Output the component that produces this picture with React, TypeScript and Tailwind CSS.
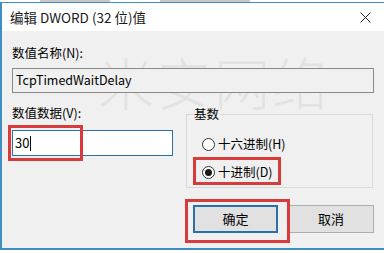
import React from "react";

const font = { fontFamily: '"Noto Sans CJK SC", "Noto Sans", sans-serif' };

export default function App() {
  return (
    <div className="relative w-[384px] h-[253px] overflow-hidden bg-white text-[12.5px] text-black" style={font}>
      {/* remnant strip of previous content */}
      <div className="h-[2px] bg-white relative">
        <div className="absolute left-[40px] top-0 w-[70px] h-[2px] bg-[#c8c8c8]" />
        <div className="absolute left-[160px] top-0 w-[90px] h-[2px] bg-[#c8c8c8]" />
      </div>
      <div className="flex flex-col h-[248px] border-l-2 border-t border-b-2 border-[#3d8fbf]">
        {/* title bar */}
        <div className="h-[28px] bg-white flex items-center justify-between pl-[8px] pr-[12px]">
          <span className="text-[13.5px] text-[#1a1a1a]">编辑 DWORD (32 位)值</span>
          <svg width="11" height="11" viewBox="0 0 11 11" className="mr-[1px]">
            <path d="M0.5 0.5 L10.5 10.5 M10.5 0.5 L0.5 10.5" stroke="#222" strokeWidth="1" />
          </svg>
        </div>
        {/* body */}
        <div className="relative flex-1 bg-[#f0f0f0] pl-[10px] pr-[10px] flex flex-col">
          {/* watermark */}
          <div className="absolute left-[96px] top-[22px] text-[56px] leading-none tracking-[2px] text-[#dadada] opacity-60 pointer-events-none select-none" style={{ fontFamily: '"Noto Sans CJK SC", sans-serif', fontWeight: 300 }}>
            米安网络
          </div>
          <div className="mt-[14px] h-[16px] leading-[16px] relative">数值名称(N):</div>
          <div className="mt-[7px] h-[25px] border border-[#8a8a8a] bg-[#f0f0f0] flex items-center pl-[3px] text-[12.5px] relative">
            TcpTimedWaitDelay
          </div>
          <div className="flex mt-[12px] relative">
            <div className="w-[161px] flex flex-col">
              <div className="h-[16px] leading-[16px]">数值数据(V):</div>
              <div className="mt-[9px] h-[26px] border border-[#2b6fa8] bg-white flex items-center pl-[2px] text-[13px] relative">
                <span>30</span>
                <span className="inline-block w-[1px] h-[15px] bg-black ml-[1px]" />
                <div className="absolute left-[-5px] top-[-6px] w-[75px] h-[36px] border-[3px] border-[#d83b3b]" />
              </div>
            </div>
            <div className="ml-[13px] w-[187px] relative mt-[9px] h-[74px] border border-[#d9d9d9]">
              <span className="absolute left-[6px] top-[-9px] bg-[#f0f0f0] px-[1px] leading-[16px]">基数</span>
              <div className="absolute left-[15px] top-[20px] flex items-center">
                <span className="w-[13px] h-[13px] rounded-full border border-[#333] bg-white" />
                <span className="ml-[3px]">十六进制(H)</span>
              </div>
              <div className="absolute left-[15px] top-[48px] flex items-center">
                <span className="w-[13px] h-[13px] rounded-full border border-[#333] bg-white flex items-center justify-center">
                  <span className="w-[7px] h-[7px] rounded-full bg-[#1a1a1a]" />
                </span>
                <span className="ml-[3px]">十进制(D)</span>
              </div>
              <div className="absolute left-[6px] top-[42px] w-[88px] h-[28px] border-[3px] border-[#d83b3b]" />
            </div>
          </div>
          <div className="flex justify-end mt-[17px] pr-[0px] gap-[10px] relative">
            <div className="relative w-[85px] h-[28px] border-2 border-[#2b70a8] bg-[#e1e1e1] flex items-center justify-center text-[13px]">
              确定
              <div className="absolute left-[-10px] top-[-8px] w-[105px] h-[44px] border-[3px] border-[#d83b3b]" />
            </div>
            <div className="w-[86px] h-[28px] border border-[#adadad] bg-[#e1e1e1] flex items-center justify-center text-[13px]">
              取消
            </div>
          </div>
        </div>
      </div>
    </div>
  );
}
